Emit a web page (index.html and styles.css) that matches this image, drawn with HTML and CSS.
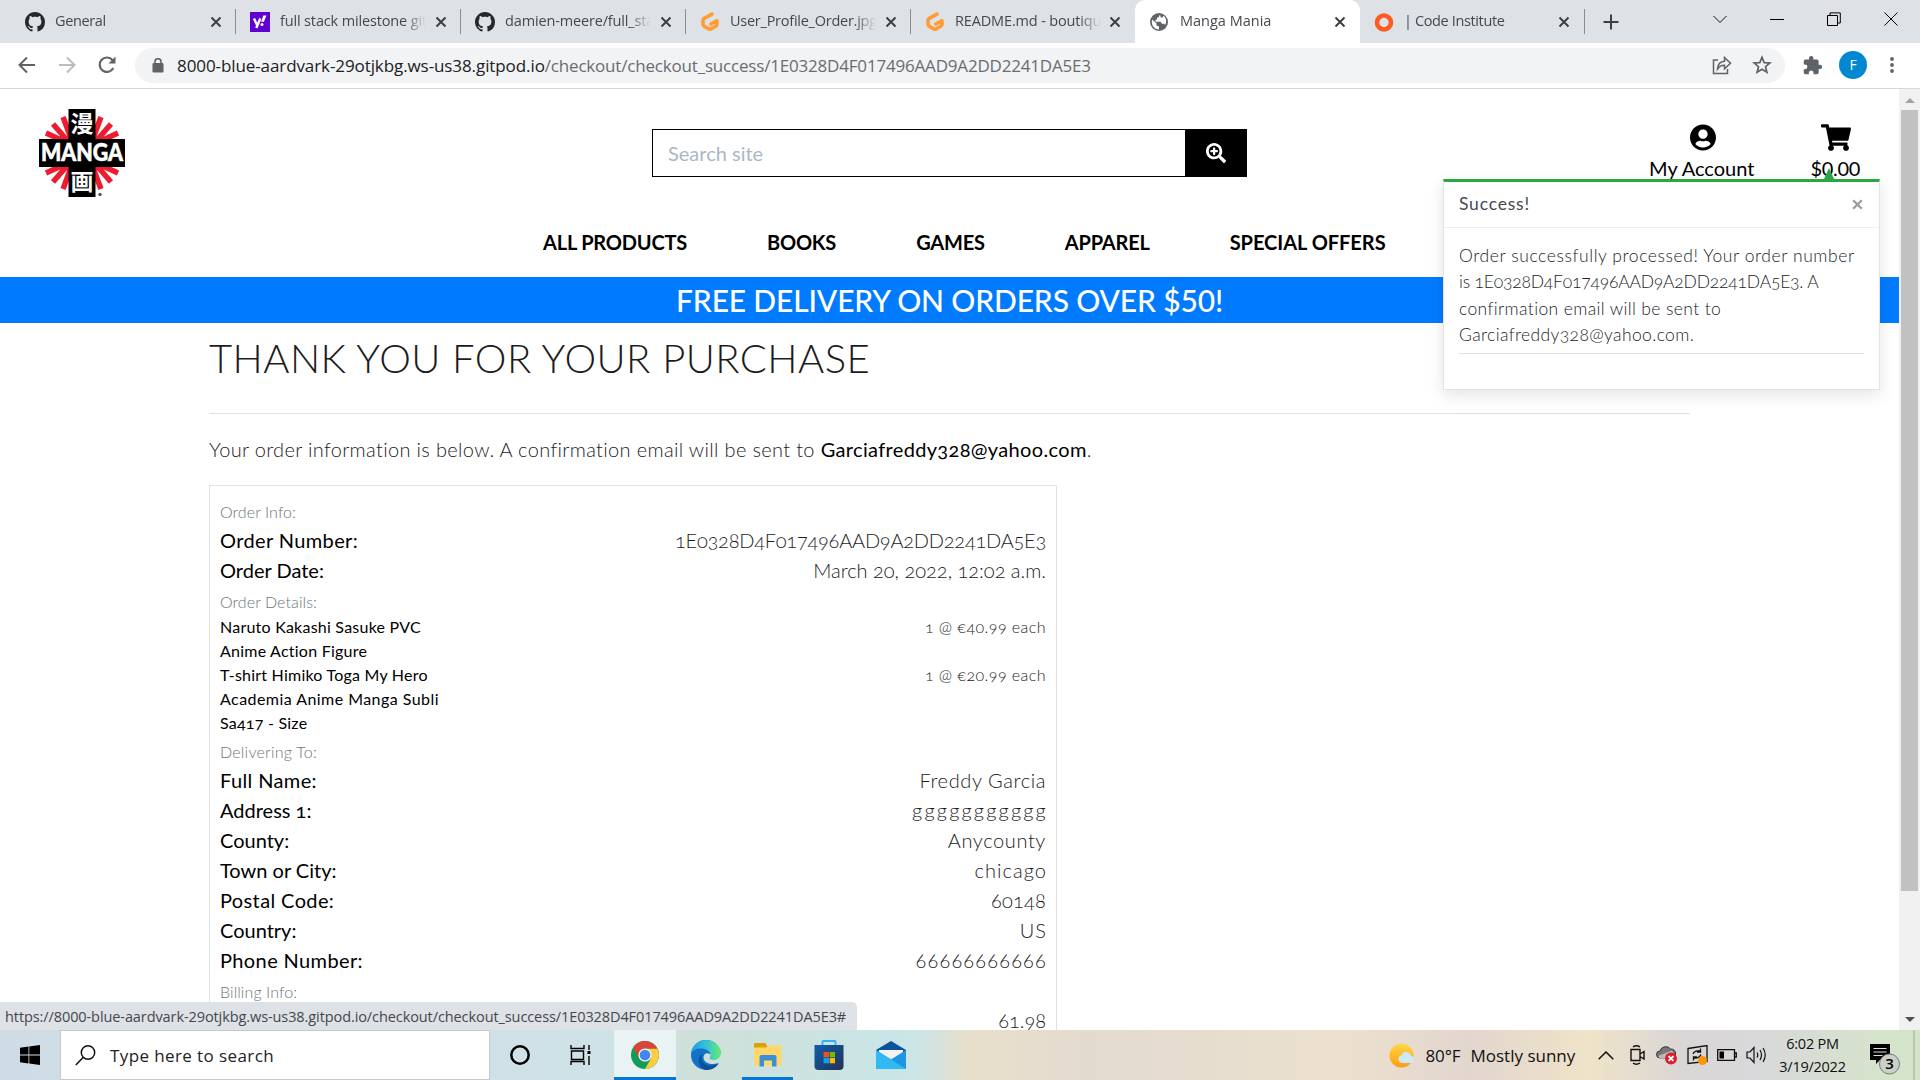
FILE: index.html
```html
<!DOCTYPE html>
<html lang="en">
<head>
<meta charset="utf-8">
<title>Manga Mania</title>
<link rel="stylesheet" href="styles.css">
</head>
<body>
<svg class="defs" width="0" height="0">
  <symbol id="github" viewBox="0 0 16 16"><path fill="#24292e" d="M8 0C3.58 0 0 3.58 0 8c0 3.54 2.29 6.53 5.47 7.59.4.07.55-.17.55-.38 0-.19-.01-.82-.01-1.49-2.01.37-2.53-.49-2.69-.94-.09-.23-.48-.94-.82-1.13-.28-.15-.68-.52-.01-.53.63-.01 1.08.58 1.23.82.72 1.21 1.87.87 2.33.66.07-.52.28-.87.51-1.07-1.78-.2-3.64-.89-3.64-3.95 0-.87.31-1.59.82-2.15-.08-.2-.36-1.02.08-2.12 0 0 .67-.21 2.2.82.64-.18 1.32-.27 2-.27s1.36.09 2 .27c1.53-1.04 2.2-.82 2.2-.82.44 1.1.16 1.92.08 2.12.51.56.82 1.27.82 2.15 0 3.07-1.87 3.75-3.65 3.95.29.25.54.73.54 1.48 0 1.07-.01 1.93-.01 2.2 0 .21.15.46.55.38A8.01 8.01 0 0 0 16 8c0-4.42-3.58-8-8-8z"/></symbol>
  <symbol id="close" viewBox="0 0 12 12"><path d="M1.500 1.500l9 9M10.500 1.500l-9 9" stroke="#3c4043" stroke-width="2" fill="none"/></symbol>
  <symbol id="gitpod" viewBox="0 0 20 20"><path d="M12 2.200L4.300 6.400Q3 7.100 3 8.600V12.200Q3 13.600 4.300 14.300L8.900 16.900Q10 17.500 11.100 16.900L15.700 14.300Q17 13.600 17 12.200V8.700L10.800 12" fill="none" stroke="#ff9d33" stroke-width="3.600" stroke-linecap="round" stroke-linejoin="round"/></symbol>
</svg>
<div class="tabs">
  <div class="tab"><svg class="fav"><use href="#github"/></svg><span class="tt t-gen">General</span><svg class="x"><use href="#close"/></svg></div>
  <div class="tab"><svg class="fav" viewBox="0 0 20 20"><path fill="#5f01d1" d="M0 0h20v20H0z"/><path d="M4 6.500l3.200 6.800M10.300 6.500L6.300 16" stroke="#fff" stroke-width="2.400" fill="none"/><path d="M13.300 3.500h3.200l-2.600 6.300h-2.800z" fill="#fff"/><circle cx="12" cy="12.600" r="1.500" fill="#fff"/></svg><span class="tt">full stack milestone git</span><svg class="x"><use href="#close"/></svg></div>
  <div class="tab"><svg class="fav"><use href="#github"/></svg><span class="tt">damien-meere/full_sta</span><svg class="x"><use href="#close"/></svg></div>
  <div class="tab"><svg class="fav"><use href="#gitpod"/></svg><span class="tt t-user">User_Profile_Order.jpg</span><svg class="x"><use href="#close"/></svg></div>
  <div class="tab nosep"><svg class="fav"><use href="#gitpod"/></svg><span class="tt">README.md - boutiqu</span><svg class="x"><use href="#close"/></svg></div>
  <div class="tab active"><svg class="fav" viewBox="0 0 20 20"><circle cx="10" cy="10" r="9" fill="#5f6368"/><path d="M3 7.500l4.500 3.800v2.200l2.500 1v3c-5 0-8-4.500-7-10zM11 2.500l-1.500 3H8v2.200H6.500v2h5l1.500 2h2.200l.8 1.300c2-2.500 1.500-7-1.500-9.300l-1 1.800h-1.700z" fill="#fff"/></svg><span class="tt t-man">Manga Mania</span><svg class="x"><use href="#close"/></svg></div>
  <div class="tab last"><svg class="fav" viewBox="0 0 20 20"><circle cx="10" cy="10.500" r="7" fill="none" stroke="#ff5a1f" stroke-width="4.600"/></svg><span class="tt t-code">| Code Institute</span><svg class="x"><use href="#close"/></svg></div>
  <svg class="plus" viewBox="0 0 16 16"><path d="M8 .5v15M.5 8h15" stroke="#3c4043" stroke-width="2"/></svg>
  <div class="win">
    <svg width="14" height="14" viewBox="0 0 14 14"><path d="M.5 4l6.500 6.500L13.500 4" fill="none" stroke="#111"/></svg>
    <svg width="14" height="14" viewBox="0 0 14 14"><path d="M0 7.500h14" stroke="#000"/></svg>
    <svg width="14" height="14" viewBox="0 0 14 14"><path d="M.5 3.500h10v10H.5zM3 3.500V.9h10.300V11h-2.800" fill="none" stroke="#000"/></svg>
    <svg width="14" height="14" viewBox="0 0 14 14"><path d="M.5.5l13 13M13.500.5l-13 13" stroke="#000"/></svg>
  </div>
</div>
<div class="toolbar">
  <svg class="tb" viewBox="0 0 20 20"><path d="M18 10H3M10 2.500L2.500 10l7.500 7.500" fill="none" stroke="#5f6368" stroke-width="2"/></svg>
  <svg class="tb" viewBox="0 0 20 20"><path d="M2 10h15M10 2.500l7.500 7.500-7.500 7.500" fill="none" stroke="#babcbe" stroke-width="2"/></svg>
  <svg class="tb" viewBox="0 0 20 20"><path d="M16.300 13A7.200 7.200 0 1 1 15.500 5.200" fill="none" stroke="#5f6368" stroke-width="2.200"/><path d="M18.500 1.500v7h-7z" fill="#5f6368"/></svg>
  <div class="omni">
    <svg width="12" height="15" viewBox="0 0 12 15"><rect x=".5" y="5" width="11" height="9.500" rx="1.200" fill="#5f6368"/><path d="M3 6V3.700a3 3 0 0 1 6 0V6" fill="none" stroke="#5f6368" stroke-width="1.600"/></svg>
    <span class="url"><span class="host">8000-blue-aardvark-29otjkbg.ws-us38.gitpod.io</span><span class="path">/checkout/checkout_success/1E0328D4F017496AAD9A2DD2241DA5E3</span></span>
    <svg width="20" height="20" viewBox="0 0 20 20"><path d="M6 5H1.500v13.500h14V14M5.500 14c.3-4.500 2.500-7.500 7-7.700V2.500l6 5.700-6 5.600v-3.500c-3-.1-5 .8-7 3.700z" fill="none" stroke="#5f6368" stroke-width="1.500"/></svg>
    <svg width="20" height="20" viewBox="0 0 20 20"><path d="M10 2.300l2.200 5.300 5.700.4-4.400 3.700 1.400 5.600-4.900-3-4.900 3 1.400-5.600L2.100 8l5.700-.4z" fill="none" stroke="#5f6368" stroke-width="1.700"/></svg>
  </div>
  <svg class="puzzle" viewBox="0 0 24 24"><path fill="#5f6368" d="M20.500 11H19V7c0-1.100-.9-2-2-2h-4V3.500a2.500 2.500 0 0 0-5 0V5H4c-1.100 0-2 .9-2 2v3.800h1.500a2.700 2.700 0 0 1 0 5.400H2V20c0 1.100.9 2 2 2h3.800v-1.500a2.700 2.700 0 0 1 5.400 0V22H17c1.100 0 2-.9 2-2v-4h1.500a2.500 2.500 0 0 0 0-5z"/></svg>
  <span class="avatar">F</span>
  <svg class="dots" viewBox="0 0 4 18"><circle cx="2" cy="3" r="1.900"/><circle cx="2" cy="9" r="1.900"/><circle cx="2" cy="15" r="1.900"/></svg>
</div>
<div class="view">
  <div class="page">
    <header class="head">
      <svg class="logo" viewBox="0 0 86 88">
        <path d="M36 40L24 8M34 38L14 15M33 36L7 24M50 40L62 8M52 38L72 15M53 36L79 24M36 48L24 80M34 50L14 73M33 52L7 64M50 48L62 80M52 50L72 73M53 52L79 64" stroke="#ee1c2e" stroke-width="5.500"/>
        <path d="M29.500 0h27v30h29.500v28H56.500v30h-27V58H0V30h29.500z"/>
        <text class="kanji" x="43" y="23">漫</text>
        <text class="kanji" x="43" y="81">画</text>
        <text class="manga" x="43" y="51.500" textLength="82" lengthAdjust="spacingAndGlyphs">MANGA</text>
        <circle cx="61" cy="85.500" r="1.700" fill="#555"/>
      </svg>
      <div class="search"><span>Search site</span><span class="go"><svg viewBox="0 0 512 512"><path fill="#fff" d="M304 192v32c0 6.600-5.400 12-12 12h-56v56c0 6.600-5.400 12-12 12h-32c-6.600 0-12-5.400-12-12v-56h-56c-6.600 0-12-5.400-12-12v-32c0-6.600 5.400-12 12-12h56v-56c0-6.600 5.400-12 12-12h32c6.600 0 12 5.400 12 12v56h56c6.600 0 12 5.400 12 12zm201 284.700L476.700 505c-9.400 9.400-24.600 9.400-33.900 0L343 405.300c-4.500-4.500-7-10.600-7-17V372c-35.300 27.600-79.700 44-128 44C93.100 416 0 322.900 0 208S93.100 0 208 0s208 93.100 208 208c0 48.300-16.400 92.700-44 128h16.300c6.400 0 12.500 2.500 17 7l99.700 99.700c9.300 9.400 9.300 24.600 0 34zM344 208c0-75.200-60.800-136-136-136S72 132.800 72 208s60.800 136 136 136 136-60.800 136-136z"/></svg></span></div>
      <div class="acts">
        <div class="act"><svg width="26" height="27" viewBox="0 0 496 512"><path d="M248 8C111 8 0 119 0 256s111 248 248 248 248-111 248-248S385 8 248 8zm0 96c48.600 0 88 39.400 88 88s-39.400 88-88 88-88-39.400-88-88 39.400-88 88-88zm0 344c-58.700 0-111.300-26.600-146.500-68.200 18.800-35.400 55.600-59.800 98.500-59.800 2.400 0 4.800.4 7.100 1.100 13 4.200 26.600 6.900 40.900 6.900s28-2.700 40.900-6.900c2.300-.7 4.700-1.100 7.100-1.100 42.900 0 79.700 24.400 98.500 59.800C359.300 421.400 306.700 448 248 448z"/></svg><span>My Account</span></div>
        <div class="act"><svg width="30" height="27" viewBox="0 0 576 512"><path d="M528.100 301.300l47.300-208C578.800 78.300 567.400 64 552 64H159.200l-9.200-44.800C147.800 8 137.900 0 126.500 0H24C10.700 0 0 10.700 0 24v16c0 13.300 10.700 24 24 24h69.900l70.200 343.400C147.300 417.100 136 435.200 136 456c0 30.900 25.100 56 56 56s56-25.100 56-56c0-15.700-6.400-29.800-16.800-40h209.600C430.400 426.200 424 440.300 424 456c0 30.900 25.100 56 56 56s56-25.100 56-56c0-22.200-12.900-41.300-31.600-50.400l5.500-24.300c3.400-15-8-29.300-23.400-29.300H218.100l-6.500-32h293.100c11.200 0 20.900-7.800 23.400-18.700z"/></svg><span class="amt">$0.00</span></div>
      </div>
    </header>
    <nav class="nav"><span>ALL PRODUCTS</span><span>BOOKS</span><span>GAMES</span><span>APPAREL</span><span class="offers">SPECIAL OFFERS</span></nav>
    <div class="banner">FREE DELIVERY ON ORDERS OVER $50!</div>
    <main class="order">
      <h2>THANK YOU FOR YOUR PURCHASE</h2>
      <div class="rule"></div>
      <p>Your order information is below. A confirmation email will be sent to <b>Garciafreddy328@yahoo.com</b>.</p>
      <div class="card">
        <div class="sec">Order Info:</div>
        <div class="row"><b class="wide">Order Number:</b><span class="hash">1E0328D4F017496AAD9A2DD2241DA5E3</span></div>
        <div class="row"><b>Order Date:</b><span>March 20, 2022, 12:02 a.m.</span></div>
        <div class="sec">Order Details:</div>
        <div class="row item"><b>Naruto Kakashi Sasuke PVC<br>Anime Action Figure</b><span class="qty">1 @ €40.99 each</span></div>
        <div class="row item"><b>T-shirt Himiko Toga My Hero<br><span class="wide">Academia Anime Manga Subli</span><br>Sa417 - Size</b><span class="qty">1 @ €20.99 each</span></div>
        <div class="sec deliver">Delivering To:</div>
        <div class="row"><b class="wide">Full Name:</b><span class="name">Freddy Garcia</span></div>
        <div class="row"><b>Address 1:</b><span class="addr">ggggggggggg</span></div>
        <div class="row"><b>County:</b><span class="name">Anycounty</span></div>
        <div class="row"><b>Town or City:</b><span class="city">chicago</span></div>
        <div class="row"><b class="wide">Postal Code:</b><span class="zip">60148</span></div>
        <div class="row"><b>Country:</b><span class="city">US</span></div>
        <div class="row"><b class="wide">Phone Number:</b><span class="phone">66666666666</span></div>
        <div class="sec">Billing Info:</div>
        <div class="row"><b></b><span class="total">61.98</span></div>
      </div>
    </main>
  </div>
  <div class="scroll"><i class="up"></i><i class="thumb"></i><i class="down"></i></div>
  <aside class="toast">
    <i class="tip"></i>
    <div class="toast-head"><span>Success!</span><svg width="11" height="11" viewBox="0 0 11 11"><path d="M1.200 1.200l8.600 8.600M9.800 1.200L1.200 9.800" stroke="#999c9f" stroke-width="2.300"/></svg></div>
    <div class="toast-body"><span class="m1">Order successfully processed! Your order number</span><br><span class="m2">is 1E0328D4F017496AAD9A2DD2241DA5E3. A</span><br>confirmation email will be sent to<br>Garciafreddy328@yahoo.com.<div class="toast-rule"></div></div>
  </aside>
  <div class="status">https://8000-blue-aardvark-29otjkbg.ws-us38.gitpod.io/checkout/checkout_success/1E0328D4F017496AAD9A2DD2241DA5E3#</div>
</div>
<div class="task">
  <div class="start"><svg width="20" height="20" viewBox="0 0 20 20"><path d="M0 2.800L8.500 1.600v8H0zM9.300 1.500L20 0v9.600H9.300zM0 10.400h8.500v8L0 17.200zM9.300 10.400H20V20L9.300 18.500z"/></svg></div>
  <div class="find"><svg width="21" height="21" viewBox="0 0 21 21"><circle cx="13" cy="7.500" r="6.700" fill="none" stroke="#111" stroke-width="1.500"/><path d="M8.300 12.300L.8 20" stroke="#111" stroke-width="1.500"/></svg><span>Type here to search</span></div>
  <div class="cell c60"><svg width="22" height="22" viewBox="0 0 22 22"><circle cx="11" cy="11" r="8.700" fill="none" stroke="#000" stroke-width="2.500"/></svg></div>
  <div class="cell c64"><svg width="22" height="20" viewBox="0 0 22 20"><path d="M1 0v3.500h13V0M1 20v-3.500h13V20M1.500 6h12v8.500h-12zM19 0v5M19 11v9" fill="none" stroke="#000" stroke-width="1.400"/><path d="M17.500 6h3v3h-3z"/></svg></div>
  <div class="cell on"><svg width="28" height="28" viewBox="0 0 28 28"><circle cx="14" cy="14" r="14" fill="#0f9d58"/><path d="M14 7.500h12.300A14 14 0 0 1 14 28l6-10.500z" fill="#ffcd40"/><path d="M8 17.500L2.300 6.300A14 14 0 0 1 26.300 7.500H14z" fill="#db4437"/><circle cx="14" cy="14" r="6.600" fill="#f1f1f1"/><circle cx="14" cy="14" r="5.300" fill="#4285f4"/></svg></div>
  <div class="cell"><svg width="30" height="30" viewBox="0 0 30 30"><defs><linearGradient id="eg"><stop stop-color="#1b9de2"/><stop offset=".5" stop-color="#35c1d8"/><stop offset="1" stop-color="#66eb6e"/></linearGradient></defs><circle cx="15" cy="15" r="15" fill="#1173c7"/><path d="M10.500 17c0 8 8 11 17 6.500C25 28 20 30 15 30c-5-1-8-6-7-11 .5-3 3-5 5-6-1 1-2.500 2-2.500 4z" fill="#0d4f9c"/><path d="M31 14v8l-3.500 1c-7 2.500-15 .5-15-5.700 0-3.200 3-5.500 6-3.300z" fill="#cfe0dc"/><path d="M0 14C1 5 8 0 15 0c8 0 15 6 15 13 0 4-3 7-7 7-3 0-5-1-4.500-2.200C20 16 20 12 16 10 9 7 2 9 0 14z" fill="url(#eg)"/></svg></div>
  <div class="cell run"><svg width="28" height="24" viewBox="0 0 28 24"><path d="M0 1q0-1 1-1h10.500l2 3.500V9H0z" fill="#e0a100"/><path d="M0 4.500h12l2-2h13.500V22.500H0z" fill="#ffd768"/><path d="M5.500 23.500V14q0-2 2-2h13q2 0 2 2v9.500H18v-6h-8v6z" fill="#3a8fd9"/></svg></div>
  <div class="cell"><svg width="30" height="30" viewBox="0 0 30 30"><defs><linearGradient id="sg" x2="1" y2="1"><stop stop-color="#0f5fae"/><stop offset="1" stop-color="#243154"/></linearGradient></defs><path d="M8.500 5.500v-3.700q0-.8.800-.8h11.400q.8 0 .8.800v3.700" fill="none" stroke="#2bb4ee" stroke-width="1.800"/><path d="M.5 5h29v21q0 4-4 4h-21q-4 0-4-4z" fill="url(#sg)"/><path d="M9.500 12H15v5.300H9.500z" fill="#f25022"/><path d="M15.700 12H21v5.300h-5.300z" fill="#7fba00"/><path d="M9.500 18H15v5.300H9.500z" fill="#00a4ef"/><path d="M15.700 18H21v5.300h-5.300z" fill="#ffb900"/></svg></div>
  <div class="cell"><svg width="30" height="29" viewBox="0 0 30 29"><path d="M0 9L15 0l15 9v6H0z" fill="#0a5299"/><path d="M3 9h24v8H3z" fill="#f2f2f2"/><path d="M0 9l15 9.500L30 9v19H0z" fill="#1e95e0"/><path d="M0 9v19h30L12 16.600z" fill="#31b9f2"/></svg></div>
  <div class="tray">
    <svg width="26" height="25" viewBox="0 0 26 25"><defs><linearGradient id="su" x2="0" y2="1"><stop stop-color="#ffd94a"/><stop offset="1" stop-color="#ff9a0d"/></linearGradient></defs><circle cx="12.500" cy="12.500" r="12" fill="url(#su)"/><path d="M13 20a4 4 0 0 1-.5-7.800 5 5 0 0 1 9.500.6 3.700 3.700 0 0 1 0 7.200z" fill="#cbe9fb"/></svg>
    <span class="deg">80°F</span><span class="sunny">Mostly sunny</span>
    <svg class="chev" width="16" height="9" viewBox="0 0 16 9"><path d="M.7 8.300L8 1l7.300 7.300" fill="none" stroke="#111" stroke-width="1.500"/></svg>
    <svg class="cam" width="15" height="20" viewBox="0 0 15 20"><path d="M1 4.500h9v11H1zM10 9l4-2.500v7.500L10 11.500M3 1.800q3-2 7 0M3 18.200q3 2 7 0" fill="none" stroke="#111" stroke-width="1.400"/></svg>
    <svg class="cloud" width="22" height="20" viewBox="0 0 22 20"><path d="M4 13a3.500 3.500 0 0 1 0-7 6 6 0 0 1 10.500-2 4.500 4.500 0 0 1 5 5q0 4-4 4z" fill="#777" stroke="#333"/><path d="M2 11L16 5.500l2.500 5-2 3H4z" fill="#bbb"/><circle cx="15" cy="13.500" r="6" fill="#d9202e"/><path d="M12.600 11.100l4.800 4.800M17.400 11.100l-4.800 4.800" stroke="#fff" stroke-width="1.800"/></svg>
    <svg class="upd" width="21" height="20" viewBox="0 0 21 20"><path d="M1 3.500l19-3v16l-19 2z" fill="none" stroke="#111" stroke-width="1.300"/><path d="M6 9q1.500-4 7-3M13.500 3.500V7H10M14 9.500q-1.500 4-7 3.500M6.500 15.500v-3.500H10" fill="none" stroke="#111" stroke-width="1.300"/><circle cx="15.500" cy="15.500" r="4.500" fill="#ff9500"/></svg>
    <svg class="bat" width="20" height="12" viewBox="0 0 20 12"><path d="M.7.700h16.800v10.600H.7zM18 4h1.300v4H18" fill="none" stroke="#111" stroke-width="1.300"/><path d="M2.500 2.500H7v7H2.500z"/></svg>
    <svg class="spk" width="21" height="18" viewBox="0 0 21 18"><path d="M1 6h3l4-4.500v15L4 12H1zM11 6.500q1.500 2.500 0 5M14 4q3 5 0 10M17 2q4.500 7 0 14" fill="none" stroke="#111" stroke-width="1.200"/></svg>
    <div class="clock">6:02 PM<br>3/19/2022</div>
    <svg class="note" width="32" height="32" viewBox="0 0 32 32"><path d="M1 1h20v16H11l-4 4v-4H1z"/><path d="M4.500 5.500h13M4.500 9h13M4.500 12.500h9" stroke="#ddd" stroke-width="1.200"/><circle cx="20.500" cy="21" r="10" fill="#ccd0cb" stroke="#777"/><text class="three" x="20.500" y="26.300">3</text></svg>
  </div>
</div>
</body>
</html>
```
FILE: styles.css
```css
* { box-sizing: border-box; }
body { margin: 0; width: 1920px; height: 1080px; overflow: hidden; display: flex; flex-direction: column; background: #fff; font-family: "Open Sans", "Noto Sans", sans-serif; color: #000; white-space: nowrap; }
svg { flex: none; display: block; }
.defs { position: absolute; }

/* browser chrome */
.tabs { height: 43px; flex: none; background: #dee1e6; display: flex; align-items: center; padding-left: 11px; }
.tab { width: 225px; height: 43px; display: flex; align-items: center; padding: 0 14px; font-size: 14.500px; letter-spacing: -.15px; color: #45494d; background: linear-gradient(#8a8d92, #8a8d92) right 9px / 1px 25px no-repeat; }
.tab.nosep { background: #dee1e6; border-radius: 0 0 10px 0; width: 224px; }
.tab.active { background: #fff; border-radius: 10px 10px 0 0; }
.tab.last { padding-right: 15px; }
.fav { width: 20px; height: 20px; margin-right: 10px; }
.tt { flex: 1; overflow: hidden; min-width: 0; padding-bottom: 2px; -webkit-mask-image: linear-gradient(90deg, #000 124px, transparent 146px); mask-image: linear-gradient(90deg, #000 124px, transparent 146px); }
.t-gen, .t-code { letter-spacing: -.37px; }
.t-man { letter-spacing: 0; padding-left: 1px; }
.t-user { letter-spacing: -.25px; }
.x { width: 12px; height: 12px; margin-left: 8px; }
.plus { width: 16px; height: 16px; margin-left: 18px; }
.win { margin-left: auto; display: flex; gap: 43px; padding: 0 22px 6px 0; }
.toolbar { height: 46px; flex: none; display: flex; align-items: center; padding: 0 25px 1px 17px; border-bottom: 1px solid #d5d7da; }
.tb { width: 20px; height: 20px; margin-right: 20px; }
.omni { width: 1650px; height: 35px; margin-left: -2px; border-radius: 18px; background: #f1f3f4; display: flex; align-items: center; padding: 0 13px 0 17px; font-size: 17px; gap: 20px; }
.url { margin-left: -7px; flex: 1; }
.host { color: #202124; letter-spacing: -.09px; }
.path { color: #696d71; letter-spacing: -.19px; }
.puzzle { width: 21px; height: 21px; margin-left: 17px; }
.avatar { width: 28px; height: 28px; border-radius: 50%; background: #0288d1; color: #fff; font-size: 14px; line-height: 28px; text-align: center; margin-left: 16px; }
.dots { width: 4px; height: 18px; margin-left: 23px; fill: #5f6368; }

/* shop page */
.view { flex: none; height: 941px; position: relative; overflow: hidden; display: flex; }
.page { width: 1899px; font-family: Lato, sans-serif; }
.head { display: flex; padding: 20px 39px 0; height: 108px; }
.logo { width: 86px; height: 88px; }
.kanji { font: 700 23px/1 "Noto Sans CJK JP", sans-serif; fill: #fff; text-anchor: middle; }
.manga { font: 900 24px/1 Lato, sans-serif; fill: #fff; stroke: #fff; stroke-width: .6; text-anchor: middle; }
.search { margin: 20px 0 0 527px; width: 595px; height: 48px; border: 1px solid #000; display: flex; align-items: center; color: #aab7c4; font-size: 20px; padding-left: 15px; }
.go { margin-left: auto; width: 61px; height: 48px; background: #000; display: grid; place-items: center; }
.go svg { width: 20px; height: 20px; }
.acts { margin-left: auto; display: flex; gap: 56px; padding-top: 15px; font-size: 20px; }
.act { display: flex; flex-direction: column; align-items: center; line-height: 30px; gap: 2px; }
.act svg { position: relative; left: 1px; }
.amt { letter-spacing: -.3px; }
.nav { height: 80px; padding: 10px 0 0 543px; display: flex; align-items: center; gap: 80px; font-size: 20px; font-weight: 700; letter-spacing: -.2px; }
.offers { letter-spacing: -.03px; }
.banner { height: 46px; background: #007bff; color: #fff; font-size: 30px; line-height: 46px; text-align: center; font-weight: 500; letter-spacing: -.15px; }
.order { padding-left: 209px; font-size: 20px; font-weight: 300; color: #1c1c1c; font-variant-numeric: oldstyle-nums; }
h2 { margin: 11px 0 31px; font-size: 40px; line-height: 48px; font-weight: 300; letter-spacing: .45px; }
.rule { width: 1481px; height: 1px; background: #dfe0e1; }
p { margin: 20px 0 21px; line-height: 30px; letter-spacing: .34px; }
.order b { font-weight: 400; color: #000; }
.card { width: 848px; border: 1px solid #dee2e6; padding: 10px; }
.sec { margin: 4px 0 2px; font-size: 16px; line-height: 24px; color: #6c757d; letter-spacing: .08px; }
.deliver { letter-spacing: .23px; }
.row { display: flex; justify-content: space-between; line-height: 30px; position: relative; top: -1px; }
.row .wide { letter-spacing: .38px; }
.item { font-size: 16px; line-height: 24px; letter-spacing: .23px; }
.item .wide { letter-spacing: .45px; }
.qty { letter-spacing: .45px; }
.hash { letter-spacing: -.24px; }
.name { letter-spacing: .6px; }
.addr { letter-spacing: 2.200px; margin-right: -2px; }
.city { letter-spacing: 1.050px; margin-right: -1px; }
.zip { letter-spacing: .2px; }
.phone { letter-spacing: 1.150px; margin-right: -1px; }
.total { letter-spacing: 0; }
.scroll { width: 21px; background: #f1f1f1; display: flex; flex-direction: column; align-items: center; justify-content: space-between; padding: 9px 0 8px; }
.up, .down { border: 5px solid transparent; border-top: 0; border-bottom: 5px solid #a3a3a3; }
.down { border-top: 5px solid #505050; border-bottom: 0; }
.thumb { width: 17px; height: 781px; background: #c1c1c1; margin: 7px 0 auto; }

/* success toast */
.toast { position: absolute; left: 1443px; top: 90px; width: 437px; height: 211px; background: #fff; border: 1px solid #e3e3e3; border-top: 3px solid #28a745; box-shadow: 0 5px 15px rgba(0,0,0,.11); font: 300 17.500px/26.250px Lato, sans-serif; font-variant-numeric: oldstyle-nums; color: #212529; }
.tip { position: absolute; left: 380px; top: -14px; border: 5px solid transparent; border-top: 0; border-bottom: 11px solid #28a745; }
.toast-head { height: 46px; display: flex; align-items: center; justify-content: space-between; padding: 0 16px 0 15px; border-bottom: 1px solid #efefef; font-weight: 400; color: #444a50; letter-spacing: .8px; }
.toast-body { padding: 15px 15px 0; letter-spacing: .37px; }
.m1 { letter-spacing: .58px; }
.m2 { letter-spacing: -.2px; }
.toast-rule { height: 1px; background: #dfe0e1; margin-top: 5px; }
.status { position: absolute; left: 0; bottom: 0; width: 857px; height: 28px; background: #dee1e6; border-radius: 0 5px 0 0; line-height: 29px; padding-left: 5px; font-size: 14.500px; letter-spacing: -.09px; color: #44484c; }

/* taskbar */
.task { flex: none; height: 50px; display: flex; background: linear-gradient(90deg, #cfdce5 0, #cfe2e7 600px, #cfe0d9 700px, #c9e5e5 880px, #cce4e5 920px, #e8dfcb 970px, #e3dad0 1100px, #ece1ce 1340px, #e2d6cf 1470px, #efe3c8 1590px, #dad6d6 1680px, #d8d8da 1760px, #d5e3cb 1880px, #d5e3cb 1913px, #9fab98 1914px, #d5e3cb 1915px); }
.start { width: 60px; display: grid; place-items: center; }
.find { width: 430px; background: #fff; border: 1px solid #c6c8ca; display: flex; align-items: center; padding-left: 14px; gap: 14px; font-size: 17px; letter-spacing: .4px; color: #222; }
.cell { width: 61.500px; display: grid; place-items: center; border-bottom: 3px solid transparent; padding-top: 3px; }
.c60 { width: 60px; }
.c64 { width: 64px; padding-right: 3px; }
.on { background: #eaf3f3; border-color: #0078d7; }
.run { background: linear-gradient(#0078d7, #0078d7) 5px bottom / 51px 3px no-repeat border-box; }
.tray { flex: 1; margin-left: 467px; display: flex; align-items: center; font-size: 17px; color: #111; }
.deg { margin-left: 11px; width: 35px; letter-spacing: -.13px; }
.sunny { margin-left: 10px; width: 105px; }
.chev { margin-left: 22px; }
.cam { margin-left: 16px; }
.cloud { margin-left: 11px; }
.upd { margin-left: 9px; }
.bat { margin-left: 9px; }
.spk { margin-left: 9px; }
.clock { width: 68px; margin-left: 12px; text-align: center; font-size: 14.500px; line-height: 23.500px; letter-spacing: -.25px; }
.note { margin: 7px 0 0 22px; }
.three { font: 600 15px "Open Sans", sans-serif; text-anchor: middle; }
```
